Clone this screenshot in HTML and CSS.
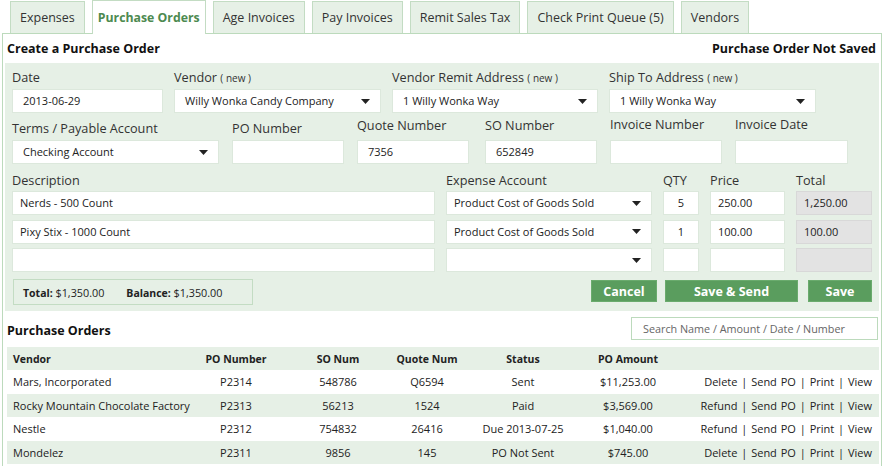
FILE: index.html
```html
<!DOCTYPE html>
<html>
<head>
<meta charset="utf-8">
<link rel="stylesheet" href="styles.css">
</head>
<body>
<div class="tabs">
  <div class="tab">Expenses</div>
  <div class="tab active">Purchase Orders</div>
  <div class="tab">Age Invoices</div>
  <div class="tab">Pay Invoices</div>
  <div class="tab">Remit Sales Tax</div>
  <div class="tab">Check Print Queue (5)</div>
  <div class="tab">Vendors</div>
</div>
<div class="panel">
  <div class="panel-head">
    <span>Create a Purchase Order</span>
    <span>Purchase Order Not Saved</span>
  </div>
  <div class="form">
    <div class="row r1">
      <div class="field"><div class="lbl">Date</div><div class="in">2013-06-29</div></div>
      <div class="field"><div class="lbl">Vendor <small>( new )</small></div><div class="in sel"><span>Willy Wonka Candy Company</span><svg class="arr" width="9" height="5" viewBox="0 0 9 5"><path d="M0 0h9L4.5 5z"/></svg></div></div>
      <div class="field"><div class="lbl">Vendor Remit Address <small>( new )</small></div><div class="in sel"><span>1 Willy Wonka Way</span><svg class="arr" width="9" height="5" viewBox="0 0 9 5"><path d="M0 0h9L4.5 5z"/></svg></div></div>
      <div class="field"><div class="lbl">Ship To Address <small>( new )</small></div><div class="in sel"><span>1 Willy Wonka Way</span><svg class="arr" width="9" height="5" viewBox="0 0 9 5"><path d="M0 0h9L4.5 5z"/></svg></div></div>
    </div>
    <div class="row r2">
      <div class="field"><div class="lbl">Terms / Payable Account</div><div class="in sel"><span>Checking Account</span><svg class="arr" width="9" height="5" viewBox="0 0 9 5"><path d="M0 0h9L4.5 5z"/></svg></div></div>
      <div class="field"><div class="lbl">PO Number</div><div class="in"></div></div>
      <div class="field up"><div class="lbl">Quote Number</div><div class="in">7356</div></div>
      <div class="field up shift"><div class="lbl">SO Number</div><div class="in">652849</div></div>
      <div class="field up2 shift"><div class="lbl">Invoice Number</div><div class="in"></div></div>
      <div class="field up2 shift"><div class="lbl">Invoice Date</div><div class="in"></div></div>
    </div>
    <div class="lines">
      <div class="lbl">Description</div>
      <div class="lbl">Expense Account</div>
      <div class="lbl">QTY</div>
      <div class="lbl">Price</div>
      <div class="lbl">Total</div>

      <div class="in">Nerds - 500 Count</div>
      <div class="in sel"><span>Product Cost of Goods Sold</span><svg class="arr" width="9" height="5" viewBox="0 0 9 5"><path d="M0 0h9L4.5 5z"/></svg></div>
      <div class="in c">5</div>
      <div class="in">250.00</div>
      <div class="in tot">1,250.00</div>

      <div class="in">Pixy Stix - 1000 Count</div>
      <div class="in sel"><span>Product Cost of Goods Sold</span><svg class="arr" width="9" height="5" viewBox="0 0 9 5"><path d="M0 0h9L4.5 5z"/></svg></div>
      <div class="in c">1</div>
      <div class="in">100.00</div>
      <div class="in tot">100.00</div>

      <div class="in"></div>
      <div class="in sel"><span></span><svg class="arr" width="9" height="5" viewBox="0 0 9 5"><path d="M0 0h9L4.5 5z"/></svg></div>
      <div class="in c"></div>
      <div class="in"></div>
      <div class="in tot"></div>
    </div>
    <div class="foot">
      <div class="totals"><span><b>Total:</b> $1,350.00</span><span><b>Balance:</b> $1,350.00</span></div>
      <div class="btns">
        <div class="btn b-cancel">Cancel</div>
        <div class="btn b-send">Save &amp; Send</div>
        <div class="btn b-save">Save</div>
      </div>
    </div>
  </div>
  <div class="list-head">
    <span class="lh-title">Purchase Orders</span>
    <div class="search">Search Name / Amount / Date / Number</div>
  </div>
  <table class="po">
    <colgroup>
      <col class="w1"><col class="w2"><col class="w3"><col class="w4"><col class="w5"><col class="w6"><col class="w7">
    </colgroup>
    <thead>
      <tr><th class="l">Vendor</th><th>PO Number</th><th>SO Num</th><th>Quote Num</th><th>Status</th><th>PO Amount</th><th></th></tr>
    </thead>
    <tbody>
      <tr><td class="l">Mars, Incorporated</td><td>P2314</td><td>548786</td><td>Q6594</td><td>Sent</td><td>$11,253.00</td><td class="r">Delete | Send PO | Print | View</td></tr>
      <tr><td class="l">Rocky Mountain Chocolate Factory</td><td>P2313</td><td>56213</td><td>1524</td><td>Paid</td><td>$3,569.00</td><td class="r">Refund | Send PO | Print | View</td></tr>
      <tr><td class="l">Nestle</td><td>P2312</td><td>754832</td><td>26416</td><td>Due 2013-07-25</td><td>$1,040.00</td><td class="r">Refund | Send PO | Print | View</td></tr>
      <tr><td class="l">Mondelez</td><td>P2311</td><td>9856</td><td>145</td><td>PO Not Sent</td><td>$745.00</td><td class="r">Delete | Send PO | Print | View</td></tr>
    </tbody>
  </table>
</div>
</body>
</html>
```
FILE: styles.css
```css
body {
  margin: 0;
  font-family: "Open Sans", "Noto Sans", sans-serif;
  color: #222;
  background: #fff;
}
.tabs {
  display: flex;
  gap: 7px;
  padding-left: 10px;
  height: 33px;
  align-items: flex-end;
  position: relative;
  z-index: 2;
}
.tab {
  height: 32px;
  box-sizing: border-box;
  border: 1px solid #c3dcc3;
  border-bottom: none;
  background: #e6f0e6;
  padding: 0 9px;
  display: flex;
  align-items: center;
  font-size: 12.5px;
  color: #333;
}
.tab.active {
  height: 34px;
  margin-bottom: -1px;
  padding: 0 5px;
  background: #fff;
  color: #4d8a50;
  font-weight: bold;
  font-size: 12.3px;
}
.panel {
  margin-left: 2px;
  width: 880px;
  box-sizing: border-box;
  border: 1px solid #bcdabc;
  padding: 0 2px 10px;
}
.panel-head {
  display: flex;
  justify-content: space-between;
  align-items: center;
  height: 29px;
  padding: 0 3px 0 2px;
  font-weight: bold;
  font-size: 12.5px;
  color: #111;
}
.form {
  background: #e6f0e6;
  padding: 6px 7px 6px 7px;
}
.row {
  display: grid;
}
.r1 {
  grid-template-columns: 151px 207px 206px 207px;
  column-gap: 11px;
  margin-bottom: 7px;
}
.r2 {
  grid-template-columns: 207px 112px 112px 112px 112px 113px;
  column-gap: 13px;
  margin-bottom: 8px;
}
.r2 .shift { margin-left: 3px; margin-right: -3px; }
.field { display: flex; flex-direction: column; }
.field.up .lbl { margin-top: -3px; margin-bottom: 7px; }
.field.up2 .lbl { margin-top: -4px; margin-bottom: 8px; }
.lbl {
  font-size: 12.7px;
  line-height: 16px;
  height: 16px;
  margin-bottom: 4px;
  color: #333;
  white-space: nowrap;
}
.lbl small { font-size: 10px; }
.in {
  height: 24px;
  box-sizing: border-box;
  background: #fff;
  border: 1px solid #dce8dc;
  font-size: 11px;
  line-height: 22px;
  padding: 0 10px;
  color: #222;
  white-space: nowrap;
  overflow: hidden;
}
.in.sel {
  display: flex;
  align-items: center;
  justify-content: space-between;
  padding-right: 10px;
}
.arr { fill: #222; flex: none; }
.in.c { text-align: center; padding: 0; }
.in.tot {
  background: #e3e3e3;
  border-color: #d8d8d8;
}
.lines {
  display: grid;
  grid-template-columns: 423px 206px 36px 75px 76px;
  column-gap: 11px;
  row-gap: 4.5px;
}
.lines .lbl { margin-bottom: -1.5px; }
.lines .in { padding-left: 7px; }
.lines .in.c { padding: 0; }
.foot {
  display: flex;
  justify-content: space-between;
  align-items: flex-start;
  margin-top: 7px;
}
.totals {
  margin-left: 1px;
  width: 240px;
  height: 26px;
  box-sizing: border-box;
  border: 1px solid #c3dcc3;
  display: flex;
  align-items: center;
  gap: 22px;
  padding-left: 9px;
  font-size: 10.8px;
}
.totals b { font-size: 10.5px; }
.btns {
  display: flex;
  gap: 8px;
  margin-top: 1px;
}
.btn {
  height: 22px;
  box-sizing: border-box;
  background: #5a9d5e;
  border: 1px solid #6aab6d;
  color: #fff;
  font-weight: bold;
  font-size: 12.5px;
  display: flex;
  align-items: center;
  justify-content: center;
}
.b-cancel { width: 66px; }
.b-send { width: 133px; margin-right: 2px; }
.b-save { width: 64px; }
.list-head {
  display: flex;
  justify-content: space-between;
  align-items: center;
  padding: 6px 1px 7px 2px;
}
.lh-title {
  font-weight: bold;
  font-size: 12.5px;
  color: #111;
  margin-top: 3px;
}
.search {
  width: 247px;
  height: 23px;
  box-sizing: border-box;
  border: 1px solid #bcdabc;
  font-size: 10.8px;
  line-height: 21px;
  padding-left: 11px;
  color: #666;
}
.po {
  margin-left: 2px;
  width: 872px;
  border-collapse: collapse;
  table-layout: fixed;
  font-size: 11px;
}
.w1 { width: 178px; }
.w2 { width: 102px; }
.w3 { width: 102px; }
.w4 { width: 76px; }
.w5 { width: 116px; }
.w6 { width: 94px; }
.po th, .po td {
  height: 23.5px;
  padding: 0;
  text-align: center;
  white-space: nowrap;
  color: #222;
}
.po th { font-weight: bold; height: 23px; font-size: 10.5px; }
.po thead tr { background: #e6f0e6; }
.po tbody tr:nth-child(even) { background: #e6f0e6; }
.po .l { text-align: left; padding-left: 6px; }
.po .r { text-align: right; padding-right: 7px; word-spacing: 1px; }
```
